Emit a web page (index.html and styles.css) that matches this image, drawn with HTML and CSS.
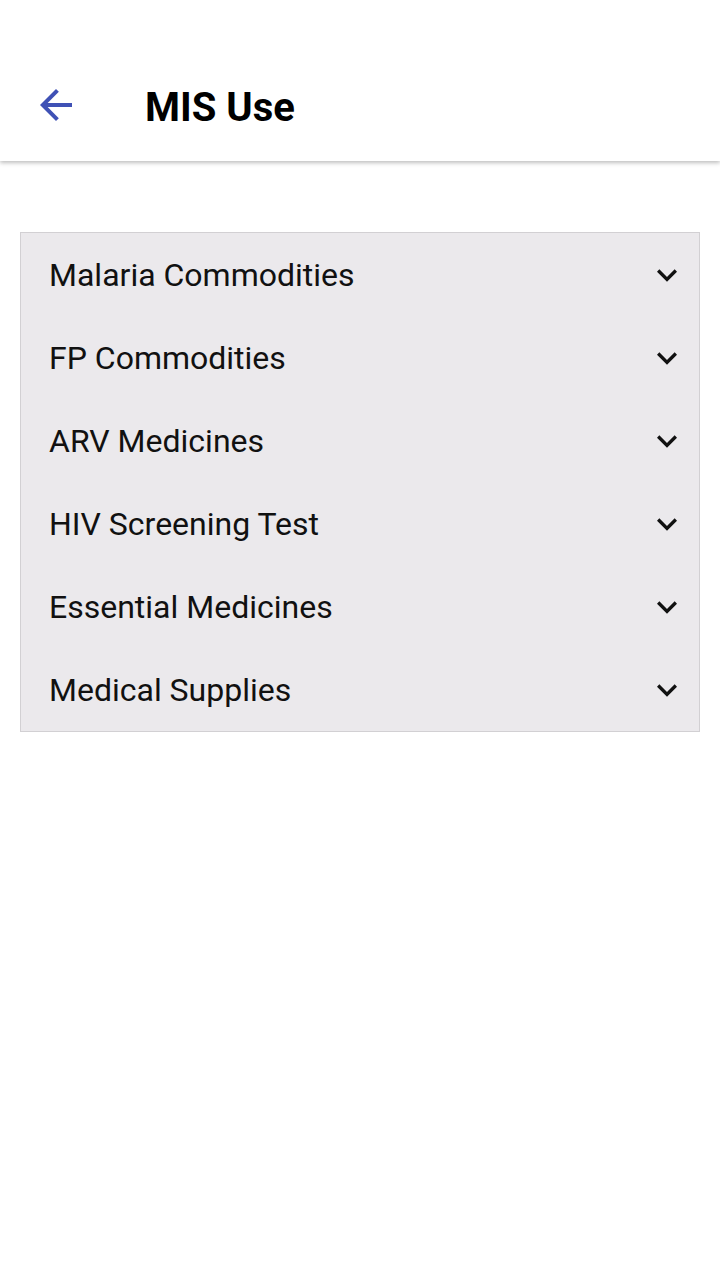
FILE: index.html
```html
<!DOCTYPE html>
<html>
<head>
<meta charset="utf-8">
<link rel="stylesheet" href="styles.css">
</head>
<body>
<header class="appbar">
  <div class="toolbar">
    <button class="back" aria-label="Back">
      <svg viewBox="0 0 24 24" width="48" height="48"><path fill="#3f51b5" d="M20 11H7.83l5.59-5.59L12 4l-8 8 8 8 1.41-1.41L7.83 13H20v-2z"/></svg>
    </button>
    <h1 class="title">MIS Use</h1>
  </div>
</header>
<main class="content">
  <div class="panel">
    <div class="row"><span class="label">Malaria Commodities</span><svg class="chev" viewBox="0 0 24 24" width="40" height="40"><path d="M16.59 8.59L12 13.17 7.41 8.59 6 10l6 6 6-6z"/></svg></div>
    <div class="row"><span class="label">FP Commodities</span><svg class="chev" viewBox="0 0 24 24" width="40" height="40"><path d="M16.59 8.59L12 13.17 7.41 8.59 6 10l6 6 6-6z"/></svg></div>
    <div class="row"><span class="label">ARV Medicines</span><svg class="chev" viewBox="0 0 24 24" width="40" height="40"><path d="M16.59 8.59L12 13.17 7.41 8.59 6 10l6 6 6-6z"/></svg></div>
    <div class="row"><span class="label">HIV Screening Test</span><svg class="chev" viewBox="0 0 24 24" width="40" height="40"><path d="M16.59 8.59L12 13.17 7.41 8.59 6 10l6 6 6-6z"/></svg></div>
    <div class="row"><span class="label">Essential Medicines</span><svg class="chev" viewBox="0 0 24 24" width="40" height="40"><path d="M16.59 8.59L12 13.17 7.41 8.59 6 10l6 6 6-6z"/></svg></div>
    <div class="row"><span class="label">Medical Supplies</span><svg class="chev" viewBox="0 0 24 24" width="40" height="40"><path d="M16.59 8.59L12 13.17 7.41 8.59 6 10l6 6 6-6z"/></svg></div>
  </div>
</main>
</body>
</html>
```
FILE: styles.css
```css
html, body {
  margin: 0;
  padding: 0;
  background: #ffffff;
  font-family: Roboto, "Noto Sans", sans-serif;
  color: #111111;
}
.appbar {
  background: #ffffff;
  padding-top: 48px;
  box-shadow: 0 2px 4px rgba(0,0,0,0.25);
  position: relative;
}
.toolbar {
  height: 113px;
  display: flex;
  align-items: center;
  padding-left: 32px;
}
.back {
  width: 48px;
  height: 48px;
  padding: 0;
  margin: 0;
  border: none;
  background: none;
  display: flex;
}
.title {
  margin: 0 0 0 65px;
  font-size: 40px;
  font-weight: 700;
  color: #000;
  position: relative;
  top: 3px;
}
.content {
  padding: 71px 20px 0 20px;
}
.panel {
  background: #ebe9ec;
  border: 1px solid #d2d0d3;
  display: flex;
  flex-direction: column;
}
.row {
  height: 83px;
  display: flex;
  align-items: center;
  justify-content: space-between;
  padding: 0 12px 0 28px;
}
.label {
  font-size: 32px;
  color: #111;
}
.chev {
  fill: #111;
}
```
